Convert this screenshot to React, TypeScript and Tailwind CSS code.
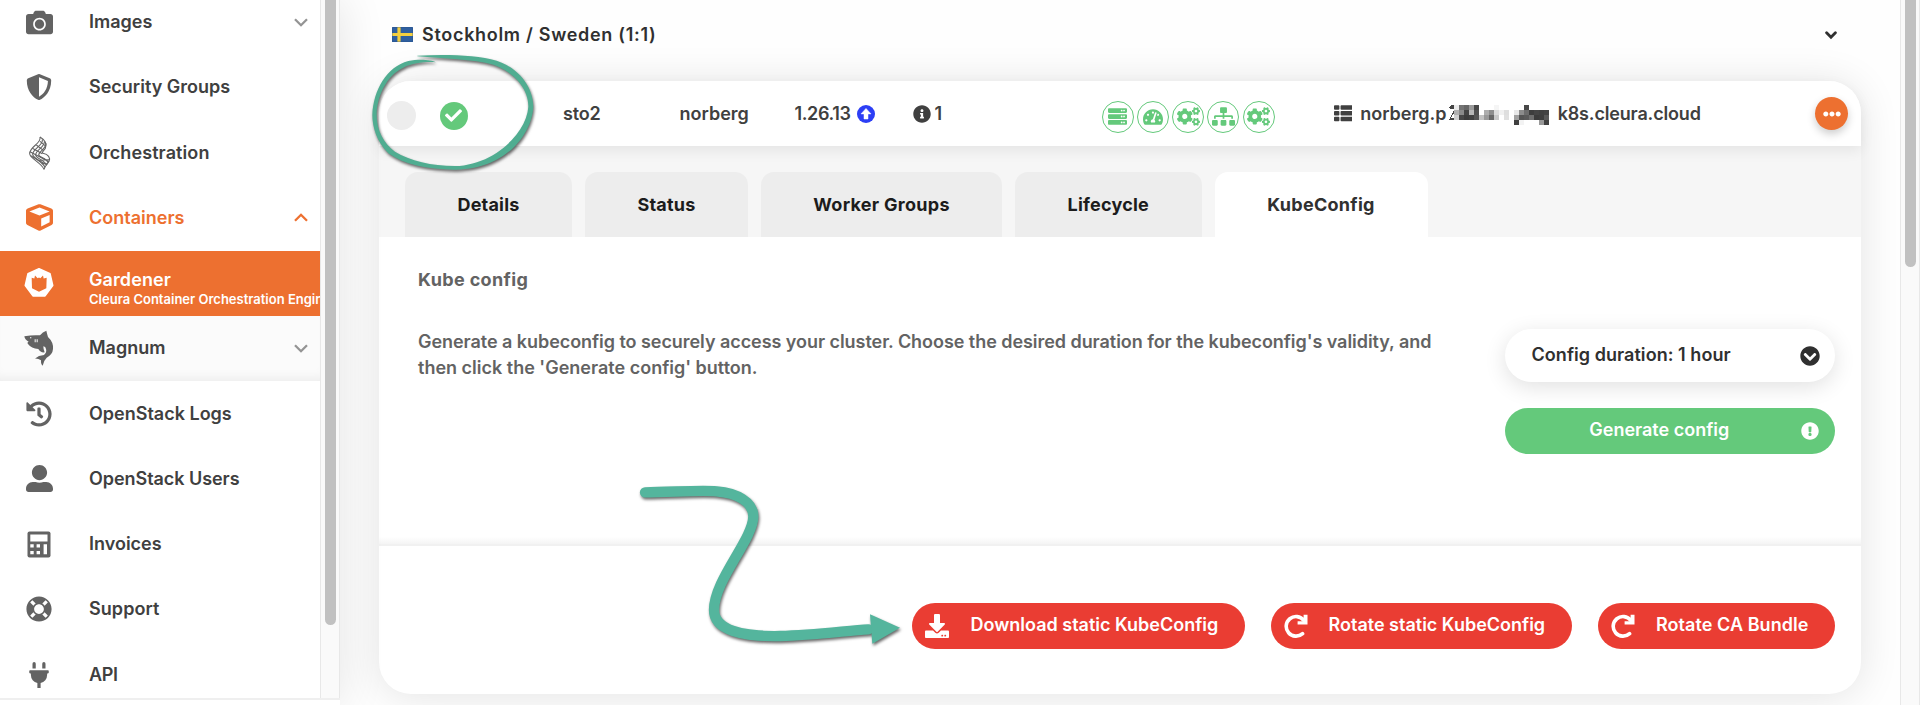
import type { ReactNode } from "react";
import {
  FaCamera,
  FaCheck,
  FaCogs,
  FaCube,
  FaDownload,
  FaEllipsisH,
  FaExclamationCircle,
  FaHistory,
  FaInfoCircle,
  FaLifeRing,
  FaPlug,
  FaServer,
  FaShieldAlt,
  FaSitemap,
  FaTachometerAlt,
  FaThList,
  FaUserAlt,
  FaChevronCircleDown,
} from "react-icons/fa";

function HeatIcon() {
  return (
    <svg className="h-[34px] w-[23px]" viewBox="87 409 69 102" fill="none" stroke="currentColor" strokeWidth="3.2">
      <path d="M123 412 C128 432 92 440 92 462 C93 476 128 490 135 509" />
      <path d="M130 419 C134 438 101 446 101 464 C102 476 132 487 138 503" />
      <path d="M136 425 C139 442 110 450 110 466 C110 476 138 482 143 496" />
      <path d="M141 431 C142 448 119 454 119 466 C121 474 144 474 147 490" />
      <path d="M123 412 C140 422 144 434 139 446 C130 458 128 458 132 461 C148 464 155 474 150 485 C146 494 136 500 135 509" />
      <path d="M123 425 L141 440 M112 436 L133 452 M100 446 L130 462 M93 456 L150 486 M95 468 L144 496 M118 482 L150 480 M128 492 L146 492" />
    </svg>
  );
}

function GardenerIcon() {
  return (
    <svg className="h-[31px] w-[30px]" viewBox="70 110 90 92" strokeLinejoin="round">
      <path d="M115 115 L148 130 L156 165 L133 196 L97 196 L74 165 L82 130Z" fill="#fff" stroke="#fff" strokeWidth="5" />
      <path d="M93 142 L101 144 L103 135 L111 143 L115 141 L119 143 L127 135 L129 144 L138 142 L137 173 L115 184 L94 173Z" fill="#ed7030" />
    </svg>
  );
}

function SharkIcon() {
  return (
    <svg className="h-[36px] w-[30px]" viewBox="74 301 90 108" fill="currentColor">
      <path d="M75 320 Q100 315 122 317 Q130 306 141 303 Q143 312 146 322 Q163 338 161 358 Q160 374 142 384 Q132 394 130 408 Q124 404 125 392 Q116 386 106 387 Q118 377 134 376 Q143 368 140 358 Q139 351 132 350 Q132 360 136 368 Q124 370 117 358 Q96 356 86 343 Q82 338 88 336 Q76 330 75 320Z" />
      <path d="M92 323 h4 v3 h-4z M106 329 h3 v9 h-3z M112 329 h3 v9 h-3z" fill="#fff" />
    </svg>
  );
}

function CalculatorIcon() {
  return (
    <svg className="h-[27px] w-[24px]" viewBox="0 0 24 27">
      <rect x="0.5" y="0.5" width="23" height="26" rx="2" fill="currentColor" />
      <path d="M3.3 3.5h17.2v7H3.3z M3.3 13.3h3.4v3.2H3.3z M9.6 13.3h3.4v3.2H9.6z M3.3 20h3.4v3.2H3.3z M9.6 20h3.4v3.2H9.6z M16.6 13.3h3.4v9.9h-3.4z" fill="#fff" />
    </svg>
  );
}

function UpgradeIcon() {
  return (
    <svg className="size-[18px]" viewBox="0 0 18 18">
      <circle cx="9" cy="9" r="9" fill="#2c3ef5" />
      <path d="M9 3.4 L14 8.9 H11 V14 H7 V8.9 H4Z" fill="#fff" stroke="#fff" strokeWidth="0.5" strokeLinejoin="round" />
    </svg>
  );
}

function Chevron({ up = false }: { up?: boolean }) {
  return (
    <svg
      className={up ? "h-[9px] w-[14px] rotate-180 text-[#ed7030]" : "h-[9px] w-[14px] text-[#949494]"}
      viewBox="0 0 14 9"
      fill="none"
      stroke="currentColor"
      strokeWidth="2.3"
    >
      <path d="M1 1.2 L7 7.2 L13 1.2" />
    </svg>
  );
}

function RotateIcon() {
  return (
    <svg className="h-6 w-6" viewBox="0 0 24 24" fill="none" stroke="currentColor" strokeWidth="3.6">
      <path d="M18.6 19.6 A9.8 9.8 0 1 1 19.8 6.4" strokeLinecap="round" />
      <path d="M23.5 0.8 V10.4 H13.6 V7.2 H19.6 V0.8Z" fill="currentColor" stroke="none" />
    </svg>
  );
}

function SwedenFlag() {
  return (
    <svg className="h-[15px] w-[21px]" viewBox="0 0 21 15">
      <rect width="21" height="15" rx="0.6" fill="#2f5f9f" />
      <path d="M5.4 0h3.2v15H5.4z M0 5.9h21v3.2H0z" fill="#f4cf3f" />
      <rect x="0.4" y="0.4" width="20.2" height="14.2" rx="0.5" fill="none" stroke="#264f86" strokeOpacity="0.45" strokeWidth="0.8" />
    </svg>
  );
}

type RowProps = { icon: ReactNode; label: string; arrow?: "up" | "down"; tone?: string; track?: string };

function NavRow({ icon, label, arrow, tone = "text-[#636363]", track = "" }: RowProps) {
  const active = tone.includes("ed7030");
  return (
    <div className={`flex h-[65.25px] shrink-0 items-center pr-[12.5px] ${tone}`}>
      <span className="flex w-[78px] justify-center">{icon}</span>
      <span className={`ml-[11px] flex-1 ${active ? "" : "text-[#404040]"} ${track}`}>{label}</span>
      {arrow && <Chevron up={arrow === "up"} />}
    </div>
  );
}

function Sidebar() {
  return (
    <aside className="z-10 flex h-[705px] w-[340px] shrink-0 flex-col overflow-hidden bg-white shadow-[0_0_44px_rgba(0,0,0,0.11)]">
      <div className="flex h-[698px] overflow-hidden">
        <nav className="flex w-80 flex-col overflow-hidden">
          <div className="-mt-[10.4px] flex flex-col">
            <NavRow icon={<FaCamera className="size-[27px]" />} label="Images" arrow="down" />
            <NavRow icon={<FaShieldAlt className="size-[26px]" />} label="Security Groups" />
            <NavRow icon={<HeatIcon />} label="Orchestration" track="tracking-[0.09px]" />
            <NavRow icon={<FaCube className="size-[27px]" />} label="Containers" arrow="up" tone="text-[#ed7030]" />
            <div className="flex h-[65.25px] bg-[#ed7030] text-white">
              <span className="flex w-[77px] shrink-0 justify-center pt-4">
                <GardenerIcon />
              </span>
              <div className="ml-3 flex flex-col pt-[18.6px] whitespace-nowrap">
                <span className="leading-[22px] tracking-[0.09px]">Gardener</span>
                <span className="text-[13px] leading-[17px]">Cleura Container Orchestration Engine</span>
              </div>
            </div>
            <div className="bg-[#fbfbfb] shadow-[inset_0_-10px_12px_-8px_rgba(0,0,0,0.07)]">
              <NavRow icon={<SharkIcon />} label="Magnum" arrow="down" />
            </div>
            <NavRow icon={<FaHistory className="size-[26px]" />} label="OpenStack Logs" />
            <NavRow icon={<FaUserAlt className="size-[27px]" />} label="OpenStack Users" track="tracking-[-0.05px]" />
            <NavRow icon={<CalculatorIcon />} label="Invoices" />
            <NavRow icon={<FaLifeRing className="size-[26px]" />} label="Support" track="tracking-[0.07px]" />
            <NavRow icon={<FaPlug className="size-[26px]" />} label="API" track="tracking-[-0.3px]" />
          </div>
        </nav>
        <div className="flex w-[20px] justify-center border-x border-[#e8e8e8] bg-[#fafafa]">
          <div className="h-[624.5px] w-[11px] rounded-b-full bg-[#c1c1c1]" />
        </div>
      </div>
      <div className="h-[2px] bg-[#efefef]" />
    </aside>
  );
}

function StatusBadge({ children }: { children: ReactNode }) {
  return (
    <span className="flex size-[32px] items-center justify-center overflow-hidden rounded-full border border-[#64c97b] text-[#64c97b]">
      {children}
    </span>
  );
}

const mosaic: [number, number, string][] = [
  [1, 0, "#ececec"], [2, 0, "#747474"], [3, 0, "#666666"], [4, 0, "#9a9a9a"], [5, 0, "#474747"], [9, 0, "#f5f5f5"], [15, 0, "#484848"],
  [1, 1, "#b0b0b0"], [2, 1, "#8a8a8a"], [3, 1, "#444444"], [4, 1, "#b8b8b8"], [5, 1, "#505050"], [7, 1, "#adadad"], [8, 1, "#8d8d8d"], [9, 1, "#dcdcdc"], [10, 1, "#f0f0f0"], [11, 1, "#dedede"], [13, 1, "#e8e8e8"], [14, 1, "#8c8c8c"], [15, 1, "#6c6c6c"], [16, 1, "#3e3e3e"], [17, 1, "#454545"], [18, 1, "#414141"], [19, 1, "#444444"],
  [1, 2, "#cfcfcf"], [2, 2, "#484848"], [3, 2, "#3c3c3c"], [4, 2, "#424242"], [5, 2, "#555555"], [6, 2, "#c2c2c2"], [7, 2, "#999999"], [8, 2, "#676767"], [9, 2, "#c8c8c8"], [11, 2, "#e0e0e0"], [13, 2, "#a0a0a0"], [14, 2, "#555555"], [15, 2, "#5a5a5a"], [16, 2, "#6f6f6f"], [17, 2, "#3c3c3c"], [18, 2, "#3f3f3f"], [19, 2, "#5a5a5a"],
  [13, 3, "#404040"], [14, 3, "#f3f3f3"], [18, 3, "#999999"], [19, 3, "#414141"],
];

function RedactedHost() {
  return (
    <svg className="mt-[3px] h-5 w-[101px]" viewBox="0 0 101 20" shapeRendering="crispEdges">
      <path d="M0 3 L2 0 H5 V5 L0 15 H5 V13 L2 13 L5 8 V4 L2 4Z" fill="#444444" />
      {mosaic.map(([x, y, fill]) => (
        <rect key={`${x}-${y}`} x={x * 5} y={y * 5} width="5" height="5" fill={fill} />
      ))}
    </svg>
  );
}

function ClusterRow() {
  return (
    <div className="relative flex h-[65px] items-center rounded-t-[32px] bg-white pl-2 whitespace-nowrap text-[#404040] shadow-[0_5px_14px_rgba(0,0,0,0.07)]">
      <span className="mt-[3px] size-[29px] rounded-full bg-[#ededed]" />
      <span className="mt-[4px] ml-[23.5px] flex size-7 items-center justify-center rounded-full bg-[#64c97b] text-white">
        <FaCheck className="size-[17px]" />
      </span>
      <span className="ml-[95.5px] w-[116.5px] tracking-[-0.2px]">sto2</span>
      <span className="w-[115px]">norberg</span>
      <span className="w-[62.5px] tracking-[-0.39px]">1.26.13</span>
      <UpgradeIcon />
      <FaInfoCircle className="ml-[37.5px] size-[18px]" />
      <span className="ml-[4px] w-[167px]">1</span>
      <div className="mt-[6px] flex gap-[3.3px]">
        <StatusBadge><FaServer className="size-[19px]" /></StatusBadge>
        <StatusBadge><FaTachometerAlt className="size-[20px]" /></StatusBadge>
        <StatusBadge><FaCogs className="size-[23px]" /></StatusBadge>
        <StatusBadge><FaSitemap className="size-[23px] shrink-0" /></StatusBadge>
        <StatusBadge><FaCogs className="size-[23px]" /></StatusBadge>
      </div>
      <FaThList className="ml-[59px] size-[18.5px]" />
      <span className="ml-[8px] w-[89px]">norberg.p</span>
      <RedactedHost />
      <span className="ml-[7.5px] tracking-[-0.17px]">k8s.cleura.cloud</span>
      <span className="mr-[13px] ml-auto flex size-[33px] items-center justify-center rounded-full bg-[#ed7030] text-white shadow-[0_4px_8px_rgba(0,0,0,0.2)]">
        <FaEllipsisH className="size-[18px]" />
      </span>
    </div>
  );
}

function Tabs() {
  return (
    <div className="flex h-[91px] gap-[13px] bg-[#f6f6f6] pt-[26px] pl-[26px] text-center leading-[65px] font-bold text-[#1c1c1c]">
      <div className="w-[167px] rounded-t-[13px] bg-[#ededed] tracking-[0.2px]">Details</div>
      <div className="w-[163px] rounded-t-[13px] bg-[#ededed] tracking-[0.2px]">Status</div>
      <div className="w-[241px] rounded-t-[13px] bg-[#ededed] tracking-[0.28px]">Worker Groups</div>
      <div className="w-[186.5px] rounded-t-[13px] bg-[#ededed] tracking-[0.22px]">Lifecycle</div>
      <div className="w-[213px] rounded-t-[13px] bg-white tracking-[0.28px] text-[#303030]">KubeConfig</div>
    </div>
  );
}

function DangerButton({ icon, label, gap, width }: { icon: ReactNode; label: string; gap: string; width: string }) {
  return (
    <button className={`flex h-[46px] items-center rounded-full bg-[#ea3d33] pl-[12.5px] whitespace-nowrap text-white ${width}`}>
      {icon}
      <span className={`-mt-[2px] ${gap}`}>{label}</span>
    </button>
  );
}

function Annotations() {
  return (
    <svg className="pointer-events-none absolute inset-0 z-20 h-[705px] w-[1920px] drop-shadow-[1px_2px_1.5px_rgba(0,0,0,0.6)]" viewBox="0 0 1920 705">
      <g transform="translate(360 0) scale(0.33333)">
        <path
          fill="#50ad91"
          d="M172 167 C260 163 350 165 410 182 C480 205 520 265 520 320 C516 400 440 508 285 509 C200 508 130 493 85 460 C50 425 37 380 37 345 C40 270 80 200 145 183 C180 176 215 180 228 187 C200 185 160 187 130 203 C80 225 50 290 50 345 C50 390 70 430 105 455 C150 482 215 498 285 498 C400 496 500 400 505 320 C506 265 460 215 400 194 C340 178 250 176 172 169Z"
        />
      </g>
      <g transform="translate(620 460) scale(0.33333)">
        <path
          fill="none"
          stroke="#54b59d"
          strokeWidth="31"
          strokeLinecap="round"
          d="M75 97 C150 97 240 89 290 94 C350 99 400 125 400 170 C398 240 282 360 282 450 C282 512 370 530 480 528 C580 526 680 512 745 508"
        />
        <path fill="#54b59d" d="M750 463 L840 503 L757 551Z" />
      </g>
    </svg>
  );
}

export default function App() {
  return (
    <div className="relative flex h-[705px] w-[1920px] overflow-hidden bg-[#fefefe] font-['Inter',sans-serif] text-[18px] leading-[26px] font-semibold">
      <Sidebar />
      <main className="flex min-w-0 flex-1 flex-col pl-[39px]">
        <header className="flex h-[81px] items-start pt-[21.5px] pr-[63.5px] pl-[13px] text-[#303030]">
          <span className="mt-[5px]"><SwedenFlag /></span>
          <span className="ml-[9px] flex-1 tracking-[0.7px]">Stockholm / Sweden (1:1)</span>
          <svg className="mt-[9.5px] h-[9px] w-[12px]" viewBox="0 0 12 9" fill="none" stroke="currentColor" strokeWidth="2.8" strokeLinecap="round">
            <path d="M1.6 1.8 L6 6.3 L10.4 1.8" />
          </svg>
        </header>
        <section className="flex h-[613px] w-[1482px] shrink-0 flex-col rounded-[32px] bg-white shadow-[0_2px_40px_rgba(0,0,0,0.11)]">
          <ClusterRow />
          <Tabs />
          <div className="flex h-[309px] shrink-0 border-b-2 border-[#f1f1f1] bg-linear-to-b from-white from-[300px] to-[#f4f4f4] pr-[26px] pl-[39px] text-[#636363]">
            <div className="w-[1030px] pt-[29.5px]">
              <h2 className="font-bold tracking-[0.35px]">Kube config</h2>
              <p className="mt-9 whitespace-nowrap">
                <span className="block tracking-[-0.05px]">
                  Generate a kubeconfig to securely access your cluster. Choose the desired duration for the kubeconfig&apos;s validity, and
                </span>
                <span className="block">then click the &apos;Generate config&apos; button.</span>
              </p>
            </div>
            <div className="ml-auto flex w-[330px] flex-col gap-[26px] pt-[92px]">
              <div className="flex h-[53px] items-center justify-between rounded-full bg-white pr-[15.5px] pb-px pl-[26.5px] tracking-[0.05px] text-[#303030] shadow-[0_5px_22px_rgba(0,0,0,0.12)]">
                Config duration: 1 hour
                <FaChevronCircleDown className="mt-px size-[20px]" />
              </div>
              <button className="flex h-[46px] items-center rounded-full bg-[#64c97b] pr-[16.5px] text-white">
                <span className="-mt-[2px] flex-1 pl-[13px] text-center">Generate config</span>
                <FaExclamationCircle className="size-[18px]" />
              </button>
            </div>
          </div>
          <div className="flex gap-[26px] pt-[57px] pr-[26px]">
            <div className="flex-1" />
            <DangerButton icon={<FaDownload className="size-6" />} label="Download static KubeConfig" gap="ml-[22px]" width="w-[333px]" />
            <DangerButton icon={<RotateIcon />} label="Rotate static KubeConfig" gap="ml-[21px]" width="w-[301px]" />
            <DangerButton icon={<RotateIcon />} label="Rotate CA Bundle" gap="ml-[21.5px] tracking-[0.06px]" width="w-[237px]" />
          </div>
        </section>
      </main>
      <div className="z-10 flex w-5 shrink-0 justify-center border-x border-[#e8e8e8] bg-[#fafafa]">
        <div className="h-[267px] w-[11px] rounded-b-full bg-[#c1c1c1]" />
      </div>
      <Annotations />
    </div>
  );
}
